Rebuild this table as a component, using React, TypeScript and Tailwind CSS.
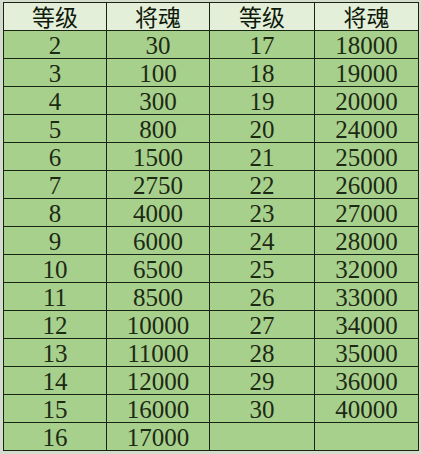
import { Fragment } from 'react';

const left: [string, string][] = [
  ['2', '30'], ['3', '100'], ['4', '300'], ['5', '800'], ['6', '1500'],
  ['7', '2750'], ['8', '4000'], ['9', '6000'], ['10', '6500'], ['11', '8500'],
  ['12', '10000'], ['13', '11000'], ['14', '12000'], ['15', '16000'], ['16', '17000'],
];

const right: [string, string][] = [
  ['17', '18000'], ['18', '19000'], ['19', '20000'], ['20', '24000'], ['21', '25000'],
  ['22', '26000'], ['23', '27000'], ['24', '28000'], ['25', '32000'], ['26', '33000'],
  ['27', '34000'], ['28', '35000'], ['29', '36000'], ['30', '40000'], ['', ''],
];

const cell = 'flex items-center justify-center border-r border-b border-[#1a2414] h-[28px] leading-none text-[#1c2a14]';
const num = `${cell} bg-[#a8d08d] text-[25px] font-['Liberation_Serif',serif] pt-[2px]`;

export default function App() {
  return (
    <div className="w-[421px] h-[454px] bg-[#d4dccd] pt-[2px] pl-[3px]">
      <div className="grid grid-cols-[103px_103px_105px_104px] w-[416px] border-l border-t border-[#1a2414]">
        {['等级', '将魂', '等级', '将魂'].map((h, i) => (
          <div key={i} className={`${cell} bg-[#e3efd9] text-[23px] text-[#101a0c] font-['Noto_Sans_CJK_SC',sans-serif]`}>
            {h}
          </div>
        ))}
        {left.map((row, i) => (
          <Fragment key={i}>
            <div className={num}>{row[0]}</div>
            <div className={num}>{row[1]}</div>
            <div className={num}>{right[i][0]}</div>
            <div className={num}>{right[i][1]}</div>
          </Fragment>
        ))}
      </div>
    </div>
  );
}
